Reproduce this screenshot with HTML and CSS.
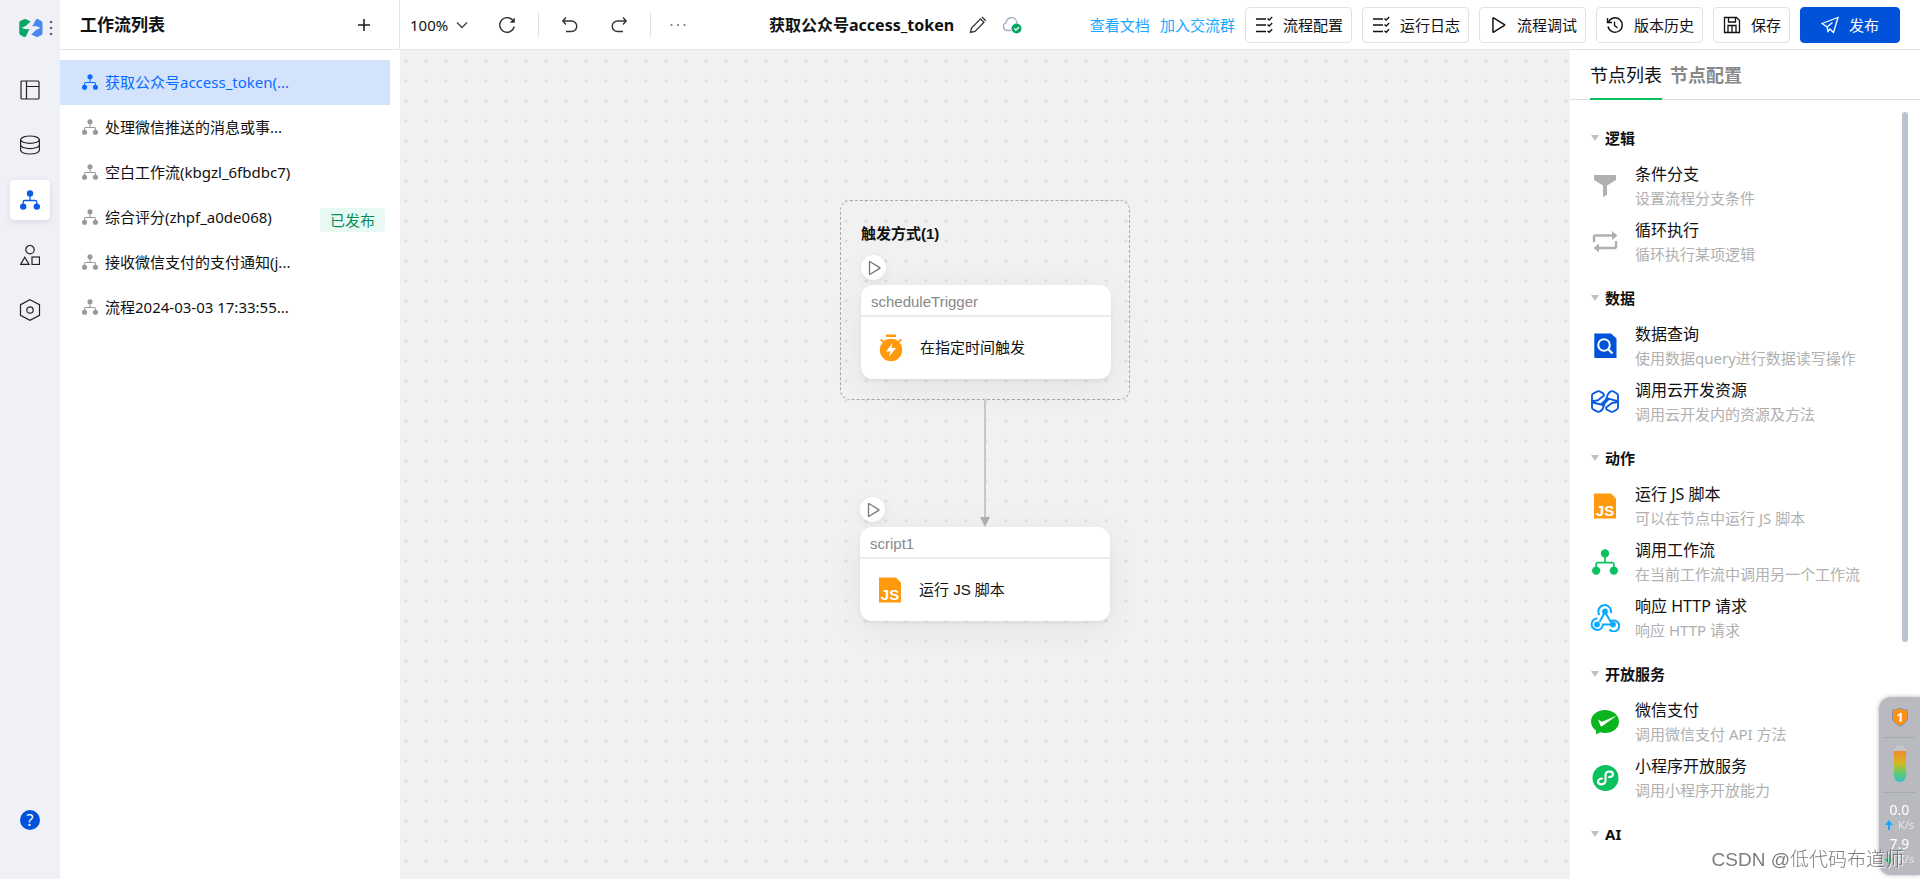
FILE: index.html
```html
<!DOCTYPE html>
<html lang="zh-CN">
<head>
<meta charset="utf-8">
<title>工作流</title>
<link rel="stylesheet" href="styles.css">
</head>
<body>
<svg class="sprite" aria-hidden="true">
  <symbol id="tree" viewBox="0 0 20 20"><circle cx="10" cy="3.4" r="3.2" fill="currentColor"/><circle cx="3.2" cy="16.6" r="3.2" fill="currentColor"/><circle cx="16.8" cy="16.6" r="3.2" fill="currentColor"/><path d="M10 5v5.500M3.200 15v-3.200q0-1.300 1.300-1.300h11q1.300 0 1.300 1.300V15" fill="none" stroke="currentColor" stroke-width="1.300"/></symbol>
  <symbol id="play" viewBox="0 0 16 16"><path d="M3.500 2v12q0 .6.6.3l9.600-5.900q.6-.4 0-.8L4.100 1.700q-.6-.3-.6.3z" fill="none" stroke="currentColor" stroke-width="1.300"/></symbol>
  <symbol id="checks" viewBox="0 0 18 18"><path d="M1 3h10M1 9h10M1 15.500h10" fill="none" stroke="currentColor" stroke-width="1.500"/><path d="M12.500 2.500l1.700 1.500 3-3M12.500 8.500l1.700 1.500 3-3M12.500 14.800l1.700 1.500 3-3" fill="none" stroke="currentColor" stroke-width="1.300"/></symbol>
</svg>

<div class="app">
  <nav class="rail">
    <div class="brand">
      <svg width="24" height="20" viewBox="0 0 24 20"><path d="M.3 4.600Q.3 3.600 1.200 3.100L5 1.200q1-.5 2 0l4.600 2.200L7 7.800 2.500 10l5 1.300 3-.6L7 18.300q-.8 1.200-2 .6l-3.500-1.800q-1.200-.6-1.200-1.800z" fill="#07a568"/><path d="M13.200 8.400L16.800 1.800q.8-1.300 2-.7l3.500 1.800q1.200.6 1.200 1.800v10.700q0 1-.9 1.500L19 18.800q-1 .5-2 0l-4.700-2.400L17 12l4.500-2.300-5-1.600z" fill="#4a88f0"/></svg>
      <svg width="4" height="18" viewBox="0 0 4 18" fill="#5a6478"><circle cx="2" cy="3" r="1.300"/><circle cx="2" cy="9" r="1.300"/><circle cx="2" cy="15" r="1.300"/></svg>
    </div>
    <button class="rail-item" aria-label="页面"><svg width="20" height="20" viewBox="0 0 20 20" fill="none" stroke="#222" stroke-width="1.200"><rect x="1" y="1" width="18" height="18" rx="1"/><path d="M6.500 1v18M6.500 6.500H19"/></svg></button>
    <button class="rail-item" aria-label="数据"><svg width="20" height="20" viewBox="0 0 20 20" fill="none" stroke="#222" stroke-width="1.200"><ellipse cx="10" cy="4.700" rx="9.400" ry="3.700"/><path d="M.6 4.700v10.600C.6 17.400 4.800 19 10 19s9.400-1.600 9.400-3.700V4.700M.6 10c0 2 4.200 3.600 9.400 3.600s9.400-1.600 9.400-3.600"/></svg></button>
    <button class="rail-item active" aria-label="工作流"><svg width="20" height="20"><use href="#tree"/></svg></button>
    <button class="rail-item" aria-label="组件"><svg width="20" height="20" viewBox="0 0 20 20" fill="none" stroke="#222" stroke-width="1.200"><circle cx="10" cy="4.700" r="4.200"/><path d="M4.800 12.300L9 19.400H.600z"/><rect x="12" y="12" width="7.500" height="7.500"/></svg></button>
    <button class="rail-item" aria-label="设置"><svg width="22" height="22" viewBox="0 0 22 22" fill="none" stroke="#222" stroke-width="1.200"><path d="M11 .700l9.500 5v10.600l-9.500 5-9.500-5V5.700z"/><circle cx="11" cy="11" r="3.200"/></svg></button>
    <button class="rail-item help" aria-label="帮助"><svg width="20" height="20" viewBox="0 0 20 20"><circle cx="10" cy="10" r="10" fill="#0052d9"/><text x="10" y="15.500" text-anchor="middle" font-size="16" fill="#fff">?</text></svg></button>
  </nav>

  <aside class="flows">
    <header class="flows-head"><h1>工作流列表</h1><button class="add" aria-label="新建"><svg width="12" height="12" viewBox="0 0 12 12"><path d="M6 0v12M0 6h12" stroke="#222" stroke-width="1.600"/></svg></button></header>
    <ul class="flow-list">
      <li class="flow active"><svg width="16" height="16"><use href="#tree"/></svg><span>获取公众号access_token(...</span></li>
      <li class="flow"><svg width="16" height="16"><use href="#tree"/></svg><span>处理微信推送的消息或事...</span></li>
      <li class="flow"><svg width="16" height="16"><use href="#tree"/></svg><span>空白工作流(kbgzl_6fbdbc7)</span></li>
      <li class="flow"><svg width="16" height="16"><use href="#tree"/></svg><span>综合评分(zhpf_a0de068)</span><em class="tag">已发布</em></li>
      <li class="flow"><svg width="16" height="16"><use href="#tree"/></svg><span>接收微信支付的支付通知(j...</span></li>
      <li class="flow"><svg width="16" height="16"><use href="#tree"/></svg><span>流程2024-03-03 17:33:55...</span></li>
    </ul>
  </aside>

  <div class="work">
    <header class="toolbar">
      <div class="tools">
        <button class="zoom-level">100%<svg width="12" height="12" viewBox="0 0 12 12"><path d="M1 3.500L6 8.500 11 3.500" fill="none" stroke="#444" stroke-width="1.400"/></svg></button>
        <button class="tool" aria-label="刷新"><svg width="18" height="18" viewBox="0 0 18 18"><path d="M15.500 5.500A7.300 7.300 0 1 0 16.200 10.500" fill="none" stroke="#333" stroke-width="1.400"/><path d="M16.800 1.500v5.300h-5z" fill="#333"/></svg></button>
        <i class="sep"></i>
        <button class="tool" aria-label="撤销"><svg width="18" height="18" viewBox="0 0 18 18" fill="none" stroke="#333" stroke-width="1.400"><path d="M5 1.500L1.800 5 5 8.500M2 5h8.500a5 5 0 0 1 0 10.500H5"/></svg></button>
        <button class="tool" aria-label="重做"><svg width="18" height="18" viewBox="0 0 18 18" fill="none" stroke="#333" stroke-width="1.400"><path d="M13 1.500L16.200 5 13 8.500M16 5H7.500a5 5 0 0 0 0 10.500H13"/></svg></button>
        <i class="sep"></i>
        <button class="tool" aria-label="更多"><svg width="18" height="18" viewBox="0 0 18 18" fill="#777"><circle cx="2.500" cy="9" r="1.100"/><circle cx="9" cy="9" r="1.100"/><circle cx="15.500" cy="9" r="1.100"/></svg></button>
      </div>
      <div class="doc">
        <h2>获取公众号access_token</h2>
        <svg width="18" height="18" viewBox="0 0 18 18" fill="none" stroke="#333" stroke-width="1.300"><path d="M1.500 16.500l1-4.500L11.500 2.800l3.500 3.500L6 15.500zM13 1l3.800 3.800"/></svg>
        <svg width="20" height="18" viewBox="0 0 20 18"><path d="M9 14.500H5A4 4 0 0 1 4.300 6.700 5.200 5.200 0 0 1 14.500 5.500Q15 6.500 15 7.500" fill="none" stroke="#a3adc2" stroke-width="1.300"/><circle cx="14.500" cy="12.500" r="5" fill="#07a568"/><path d="M12.200 12.500l1.700 1.700 3-3" fill="none" stroke="#fff" stroke-width="1.300"/></svg>
      </div>
      <div class="actions">
        <div class="links"><a href="#">查看文档</a><a href="#">加入交流群</a></div>
        <button class="btn"><svg width="18" height="18"><use href="#checks"/></svg>流程配置</button>
        <button class="btn"><svg width="18" height="18"><use href="#checks"/></svg>运行日志</button>
        <button class="btn"><svg width="18" height="18"><use href="#play"/></svg>流程调试</button>
        <button class="btn"><svg width="18" height="18" viewBox="0 0 18 18" fill="none" stroke="currentColor" stroke-width="1.400"><path d="M2.500 6A7.200 7.200 0 1 1 2 10.500M1.500 2v4.500H6M8.500 5.500v4l3 2.500"/></svg>版本历史</button>
        <button class="btn"><svg width="18" height="18" viewBox="0 0 18 18" fill="none" stroke="currentColor" stroke-width="1.300"><path d="M1.500 1.500h12l3 3v12h-15zM5.500 1.500v4.500h7V1.500M5 16.500V9.500h8v7M9 10v6"/></svg>保存</button>
        <button class="btn primary"><svg width="18" height="18" viewBox="0 0 18 18" fill="none" stroke="currentColor" stroke-width="1.300"><path d="M1 7.500L17 1.500 12.500 16.500 8.800 13 7 15.500 6 11zM6 11l5.500-4.500"/></svg>发布</button>
      </div>
    </header>

    <div class="stage">
      <main class="canvas">
        <section class="trigger">
          <h3>触发方式(1)</h3>
          <button class="run" aria-label="运行"><svg width="16" height="16"><use href="#play"/></svg></button>
          <article class="card">
            <header>scheduleTrigger</header>
            <div class="card-body"><svg width="24" height="28" viewBox="0 0 24 28"><path d="M7 .500h10v2.500H7z" fill="#ff9a0e"/><circle cx="12" cy="16" r="11.200" fill="#ff9a0e"/><path d="M1.500 5.500l4 3M22.500 5.500l-4 3" stroke="#ff9a0e" stroke-width="2"/><path d="M13.500 9L7 17.500h4.500L10 23l7-9h-4.500z" fill="#fff"/></svg><span>在指定时间触发</span></div>
          </article>
        </section>
        <svg class="edge" width="10" height="128" viewBox="0 0 10 128"><path d="M5 0v120" stroke="#c8c8c8" stroke-width="2"/><path d="M0 118h10l-5 10z" fill="#b0b0b0"/></svg>
        <section class="script">
          <button class="run" aria-label="运行"><svg width="16" height="16"><use href="#play"/></svg></button>
          <article class="card">
            <header>script1</header>
            <div class="card-body"><svg class="js" width="24" height="26" viewBox="0 0 24 26"><path d="M1 .5h17l5 5v20H1z" fill="#ff9a0e"/><text x="12" y="22.500" text-anchor="middle">JS</text></svg><span>运行 JS 脚本</span></div>
          </article>
        </section>
      </main>

      <aside class="panel">
        <div class="tabs"><button class="tab active">节点列表</button><button class="tab">节点配置</button></div>
        <div class="groups">
          <section class="group">
            <h4>逻辑</h4>
            <div class="node"><svg width="30" height="28" viewBox="0 0 30 28"><path d="M4 3h22v5l-9 5.500v9.500l-4 2V13.500L4 8z" fill="#b0b0b0"/></svg><p>条件分支<small>设置流程分支条件</small></p></div>
            <div class="node"><svg width="30" height="28" viewBox="0 0 30 28"><path d="M4 14V9q0-1.500 1.500-1.500H23M26 13v5.500q0 1.500-1.500 1.500H7" fill="none" stroke="#b0b0b0" stroke-width="2.400"/><path d="M22 3l5.500 4.500L22 12zM9 15.500L3.500 20 9 24.500z" fill="#b0b0b0"/></svg><p>循环执行<small>循环执行某项逻辑</small></p></div>
          </section>
          <section class="group">
            <h4>数据</h4>
            <div class="node"><svg width="30" height="28" viewBox="0 0 30 28"><path d="M5 1.500h16l5.500 5V26H5q-.7 0-.7-.7V2.200q0-.7.7-.7z" fill="#0052d9"/><circle cx="14" cy="13" r="5.800" fill="none" stroke="#fff" stroke-width="2"/><path d="M18 17l4.500 4.500" stroke="#fff" stroke-width="2.200"/></svg><p>数据查询<small>使用数据query进行数据读写操作</small></p></div>
            <div class="node"><svg width="30" height="28" viewBox="0 0 30 28" fill="none" stroke="#0b5ce0" stroke-width="1.900" stroke-linejoin="round" stroke-linecap="round"><path d="M14 7.500q0-2-1.500-2.700L9.500 3.300Q8.500 3 7.500 3.300L3.500 5.300Q2 6 2 7.500v12q0 1.500 1.500 2.200l4 2q1 .4 2 0 3-1.200 4-5L17 8.500q1.300-4.300 4-5.200 1-.3 2 0l3.500 2Q28 6 28 7.500v12q0 1.500-1.500 2.200l-3.500 2q-1 .3-2 0l-3.500-1.700Q16 21.300 16 19.500M2.500 13.300l5.500-1L14 7.500M3 14.500l8 2 6.500-6.500M27.500 14l-5.500 1-6 4.500M27 12.800l-8-2-6.500 6.500"/></svg><p>调用云开发资源<small>调用云开发内的资源及方法</small></p></div>
          </section>
          <section class="group">
            <h4>动作</h4>
            <div class="node"><svg class="js" width="30" height="26" viewBox="0 0 30 26"><path d="M4 .5h17l5 5v20H4z" fill="#ff9a0e"/><text x="15" y="22.500" text-anchor="middle">JS</text></svg><p>运行 JS 脚本<small>可以在节点中运行 JS 脚本</small></p></div>
            <div class="node green"><svg width="30" height="26"><use href="#tree"/></svg><p>调用工作流<small>在当前工作流中调用另一个工作流</small></p></div>
            <div class="node"><svg width="30" height="28" viewBox="0 0 30 28" fill="none" stroke="#0aabff" stroke-width="2"><path d="M9.500 11A6.300 6.300 0 1 1 20.800 9M15 8l5.500 9.500a5.500 5.500 0 1 1-1 8M15 8L9.500 18M7.500 14.500A5.700 5.700 0 1 0 13 20.500h9"/><g fill="#0aabff" stroke="none"><circle cx="15" cy="7.500" r="2.900"/><circle cx="7" cy="20.500" r="2.900"/><circle cx="23" cy="20.500" r="2.900"/></g></svg><p>响应 HTTP 请求<small>响应 HTTP 请求</small></p></div>
          </section>
          <section class="group">
            <h4>开放服务</h4>
            <div class="node"><svg width="30" height="28" viewBox="0 0 30 28"><path d="M15 2C7 2 1 7.200 1 13.500c0 3.800 2 7 5.200 9.200L6 26.500l4.300-2.200q2.300.8 4.700.8c8 0 14-5.200 14-11.600S23 2 15 2z" fill="#09b41f"/><path d="M8 11.500l4 2.300L27 7.500l-15 10.800q-1 .5-1.500-.5z" fill="#fff"/></svg><p>微信支付<small>调用微信支付 API 方法</small></p></div>
            <div class="node"><svg width="30" height="28" viewBox="0 0 30 28"><circle cx="15.500" cy="14" r="13" fill="#0ac160"/><path d="M12 14.500q-4 .5-4 3.300 0 2.500 3.300 2.500 4.200 0 4.200-4V11.500q0-4 4-4 3.500 0 3.500 2.700 0 2.500-3.800 3" fill="none" stroke="#fff" stroke-width="2.200" stroke-linecap="round"/></svg><p>小程序开放服务<small>调用小程序开放能力</small></p></div>
          </section>
          <section class="group"><h4>AI</h4></section>
        </div>
        <i class="thumb"></i>
      </aside>
    </div>
  </div>
</div>

<aside class="monitor">
  <svg width="18" height="20" viewBox="0 0 18 20"><path d="M9 1q3 2 7.500 2.200V10q0 6-7.500 9-7.500-3-7.500-9V3.200Q6 3 9 1z" fill="#ff9214" stroke="#8b8fa8"/><text x="9" y="14.500" text-anchor="middle" font-size="13" font-weight="700" fill="#fff">1</text></svg>
  <hr>
  <div class="gauge"></div>
  <hr>
  <div class="rate"><b>0.0</b><span><svg width="8" height="10" viewBox="0 0 8 10"><path d="M4 0l4 5H5v5H3V5H0z" fill="#16a8ff"/></svg>K/s</span></div>
  <div class="rate"><b>7.9</b><span><svg width="8" height="10" viewBox="0 0 8 10"><path d="M4 10l4-5H5V0H3v5H0z" fill="#12b76a"/></svg>K/s</span></div>
</aside>
<div class="watermark">CSDN @低代码布道师</div>
</body>
</html>
```
FILE: styles.css
```css
* { box-sizing: border-box; margin: 0; padding: 0; }
body { font: 15px/24px "Noto Sans", "Noto Sans CJK SC", sans-serif; color: #111; height: 100vh; overflow: hidden; background: #fff; }
button { font: inherit; color: inherit; background: none; border: 0; cursor: pointer; white-space: nowrap; }
svg { display: block; flex: none; }
ul { list-style: none; }
.sprite { position: absolute; width: 0; height: 0; }
.js text { font: 700 15px "Liberation Sans", sans-serif; fill: #fff; }

.app { display: flex; height: 100vh; }

.rail { width: 60px; flex: none; background: #eff1f6; display: flex; flex-direction: column; align-items: center; gap: 15px; padding-bottom: 39px; }
.brand { height: 55px; padding: 0 7px 0 19px; display: flex; align-items: center; justify-content: space-between; align-self: stretch; }
.rail-item { width: 40px; height: 40px; border-radius: 4px; display: flex; align-items: center; justify-content: center; }
.rail-item.active { background: #fff; color: #0b5ce0; box-shadow: 0 2px 6px rgba(0, 0, 0, .1); }
.help { margin-top: auto; }

.flows { width: 340px; flex: none; background: #fff; }
.flows-head { height: 50px; border-bottom: 1px solid #e3e4e8; border-right: 1px solid #e3e4e8; display: flex; align-items: center; justify-content: space-between; padding: 0 29px 0 20px; }
.flows-head h1 { font-size: 17px; font-weight: 700; }
.flow-list { padding: 10px 10px 0 0; }
.flow { height: 45px; padding: 0 5px 2px 22px; display: flex; align-items: center; gap: 7px; white-space: nowrap; }
.flow svg { color: #999; }
.flow.active, .flow.active svg { color: #0a6cff; }
.flow.active { background: #d4e3fc; }
.tag { margin: 6px 0 0 auto; font-style: normal; background: #e8f8f2; color: #078d5c; padding: 0 10px; border-radius: 3px; }

.work { flex: 1; min-width: 0; display: flex; flex-direction: column; }
.toolbar { height: 50px; flex: none; border-bottom: 1px solid #e3e4e8; display: flex; align-items: center; justify-content: space-between; padding: 0 20px 0 10px; }
.tools { display: flex; align-items: center; padding-right: 14px; }
.zoom-level { display: flex; align-items: center; gap: 8px; margin-right: 30px; }
.tool + .tool { margin-left: 31px; }
.sep { width: 1px; height: 25px; background: #e0e2ea; margin: 0 18px 0 22px; }
.sep + .tool { margin-left: 4px; }
.sep ~ .sep + .tool { margin-left: 0; }
.doc { display: flex; align-items: center; gap: 15px; }
.doc h2 { font-size: 16px; font-weight: 700; }
.actions { display: flex; align-items: center; gap: 10px; }
.links { display: flex; gap: 10px; }
.links a { color: #1aa7ff; text-decoration: none; }
.btn { height: 36px; padding: 0 8px 0 9px; border: 1px solid #dfe1e6; border-radius: 4px; display: flex; align-items: center; gap: 10px; }
.btn.primary { background: #0052d9; border-color: #0052d9; color: #fff; padding: 0 20px; }

.stage { flex: 1; min-height: 0; display: flex; }
.canvas { flex: 1; position: relative; overflow: hidden; background: #f1f1f1 radial-gradient(circle at 6px 11px, #dedede 1px, transparent 2px) 0 0 / 20px 20px; font-family: "Liberation Sans", "Noto Sans CJK SC", sans-serif; }
.trigger { position: absolute; left: 440px; top: 150px; width: 290px; padding: 21px 18px 20px 20px; border: 1px dashed #a8a8a8; border-radius: 10px; }
.trigger h3 { font-size: 15px; font-weight: 700; }
.trigger .run { margin-top: 9px; }
.script { position: absolute; left: 460px; top: 447px; }
.edge { position: absolute; left: 580px; top: 349px; }
.run { width: 25px; height: 25px; border-radius: 50%; background: #fff; color: #777; display: flex; align-items: center; justify-content: center; box-shadow: 0 2px 8px rgba(0, 0, 0, .08); }
.card { width: 250px; margin-top: 5px; border-radius: 12px; background: #fff; box-shadow: 0 2px 4px rgba(0, 0, 0, .06), 0 8px 36px rgba(0, 0, 0, .06); }
.card header { height: 32px; line-height: 34px; padding-left: 10px; color: #888; border-bottom: 2px solid #ececec; }
.card-body { height: 62px; display: flex; align-items: center; gap: 17px; padding-left: 18px; }

.panel { width: 350px; flex: none; position: relative; background: #fff; overflow: hidden; }
.tabs { height: 50px; padding-left: 20px; display: flex; gap: 8px; border-bottom: 1px solid #dcdde0; }
.tab { height: 50px; padding-top: 2px; font-size: 18px; border-bottom: 2px solid transparent; }
.tab:not(.active) { color: #888; font-weight: 700; }
.tab.active { border-bottom-color: #07c160; }
.groups { padding: 26px 20px 0; }
.group { padding-bottom: 12px; }
.group h4 { font-size: 15px; display: flex; align-items: center; gap: 6px; margin-bottom: 12px; }
.group h4::before { content: ""; width: 0; height: 0; margin-left: 1px; border: solid transparent; border-width: 6px 4px 0; border-top-color: #b9c3ce; }
.node { height: 56px; padding-bottom: 8px; display: flex; align-items: center; gap: 15px; }
.node.green { color: #0ac160; }
.node p { color: #111; font-size: 16px; white-space: nowrap; }
.node small { display: block; font-size: 15px; color: #b0b0b0; }
.thumb { position: absolute; right: 12px; top: 62px; width: 6px; height: 530px; border-radius: 3px; background: #b9c3ce; }

.monitor { position: fixed; right: 0; bottom: 4px; width: 41px; height: 178px; padding: 10px 4px 0; border-radius: 12px 0 0 12px; background: #b9bac0; box-shadow: 0 0 4px rgba(0, 0, 0, .3); display: flex; flex-direction: column; align-items: center; color: #fff; }
.monitor hr { width: 33px; border: 0; border-top: 1px solid #a5abb0; margin: 10px 0 7px; }
.gauge { width: 12px; height: 37px; border-radius: 6px; background: linear-gradient(#c4c5ca 6px, #f08a2c 6px, #d8b820 18px, #5fcb70 28px, #35bfc6); }
.rate { height: 34px; text-align: center; }
.rate b { display: block; font-size: 14px; font-weight: 400; line-height: 20px; }
.rate span { display: flex; align-items: center; gap: 5px; font-size: 11px; line-height: 6px; color: #e4e5e8; }
.watermark { position: fixed; right: 16px; bottom: 4px; font: 300 19px/30px "Liberation Sans", "Noto Sans CJK SC", sans-serif; color: rgba(80, 80, 80, .75); text-shadow: 1px 1px 1px #fff; }
```
